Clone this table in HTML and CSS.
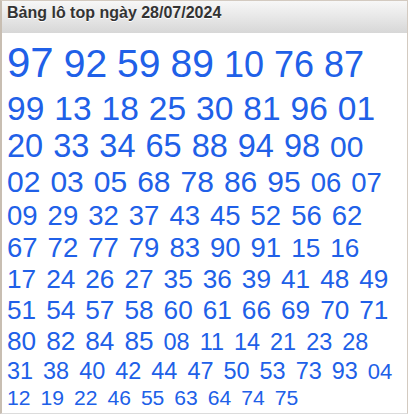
FILE: index.html
```html
<!DOCTYPE html>
<html lang="vi">
<head>
<meta charset="utf-8">
<title>Bảng lô top</title>
<link rel="stylesheet" href="styles.css">
</head>
<body>
<div class="box">
  <div class="head">Bảng lô top ngày 28/07/2024</div>
  <div class="nums">
    <div class="row r1"><span class="s42">97</span><span class="s39">92</span><span class="s39">59</span><span class="s39">89</span><span class="s36">10</span><span class="s36">76</span><span class="s36">87</span></div>
    <div class="row r2"><span class="s33">99</span><span class="s33">13</span><span class="s33">18</span><span class="s33">25</span><span class="s33">30</span><span class="s33">81</span><span class="s33">96</span><span class="s33">01</span></div>
    <div class="row r3"><span class="s32">20</span><span class="s32">33</span><span class="s32">34</span><span class="s32">65</span><span class="s32">88</span><span class="s32">94</span><span class="s32">98</span><span class="s30">00</span></div>
    <div class="row r4"><span class="s30">02</span><span class="s30">03</span><span class="s30">05</span><span class="s30">68</span><span class="s30">78</span><span class="s30">86</span><span class="s30">95</span><span class="s27">06</span><span class="s27">07</span></div>
    <div class="row r5"><span class="s27">09</span><span class="s27">29</span><span class="s27">32</span><span class="s27">37</span><span class="s27">43</span><span class="s27">45</span><span class="s27">52</span><span class="s27">56</span><span class="s27">62</span></div>
    <div class="row r6"><span class="s27">67</span><span class="s27">72</span><span class="s27">77</span><span class="s27">79</span><span class="s27">83</span><span class="s27">90</span><span class="s27">91</span><span class="s26">15</span><span class="s26">16</span></div>
    <div class="row r7"><span class="s26">17</span><span class="s26">24</span><span class="s26">26</span><span class="s26">27</span><span class="s26">35</span><span class="s26">36</span><span class="s26">39</span><span class="s26">41</span><span class="s26">48</span><span class="s26">49</span></div>
    <div class="row r8"><span class="s26">51</span><span class="s26">54</span><span class="s26">57</span><span class="s26">58</span><span class="s26">60</span><span class="s26">61</span><span class="s26">66</span><span class="s26">69</span><span class="s26">70</span><span class="s26">71</span></div>
    <div class="row r9"><span class="s26">80</span><span class="s26">82</span><span class="s26">84</span><span class="s26">85</span><span class="s23">08</span><span class="s23">11</span><span class="s23">14</span><span class="s23">21</span><span class="s23">23</span><span class="s23">28</span></div>
    <div class="row r10"><span class="s23">31</span><span class="s23">38</span><span class="s23">40</span><span class="s23">42</span><span class="s23">44</span><span class="s23">47</span><span class="s23">50</span><span class="s23">53</span><span class="s23">73</span><span class="s23">93</span><span class="s22">04</span></div>
    <div class="row r11"><span class="s21">12</span><span class="s21">19</span><span class="s21">22</span><span class="s21">46</span><span class="s21">55</span><span class="s21">63</span><span class="s21">64</span><span class="s21">74</span><span class="s21">75</span></div>
  </div>
</div>
</body>
</html>
```

FILE: styles.css
```css
html, body {
  margin: 0;
  padding: 0;
  background: #ffffff;
}

body {
  font-family: "Liberation Sans", Arial, sans-serif;
}

.box {
  box-sizing: border-box;
  width: 408px;
  height: 414px;
  border-top: 1px solid #d3cac0;
  border-left: 2px solid #c8beb2;
  border-right: 1px solid #d3cac0;
  border-bottom: 1px solid #dcdcdc;
  overflow: hidden;
}

.head {
  box-sizing: border-box;
  height: 32px;
  padding: 3px 5px 0;
  background: linear-gradient(to bottom, #f7f7f7 0%, #e9e9e9 45%, #d7d7d7 100%);
  color: #333333;
  font-size: 16px;
  font-weight: bold;
  line-height: 18px;
  text-shadow: 0 1px 0 #ffffff;
}

.nums {
  padding: 9px 0 0 5px;
  color: #2060e8;
}

.row {
  display: flex;
  align-items: baseline;
  gap: 10px;
  line-height: 1;
  white-space: nowrap;
}

.r1 { height: 50px; }
.r2 { height: 38px; }
.r3 { height: 37px; }
.r4 { height: 35px; }
.r5 { height: 32px; }
.r6 { height: 32px; }
.r7 { height: 31px; }
.r8 { height: 31px; }
.r9 { height: 32px; }
.r10 { height: 27px; }
.r11 { height: 22px; }

.s42 { font-size: 42px; }
.s39 { font-size: 39px; }
.s36 { font-size: 36px; }
.s33 { font-size: 33.5px; }
.s32 { font-size: 32.5px; }
.s30 { font-size: 30px; }
.s27 { font-size: 27.5px; }
.s26 { font-size: 26.2px; }
.s23 { font-size: 23.45px; }
.s22 { font-size: 22px; }
.s21 { font-size: 21.1px; }
```
